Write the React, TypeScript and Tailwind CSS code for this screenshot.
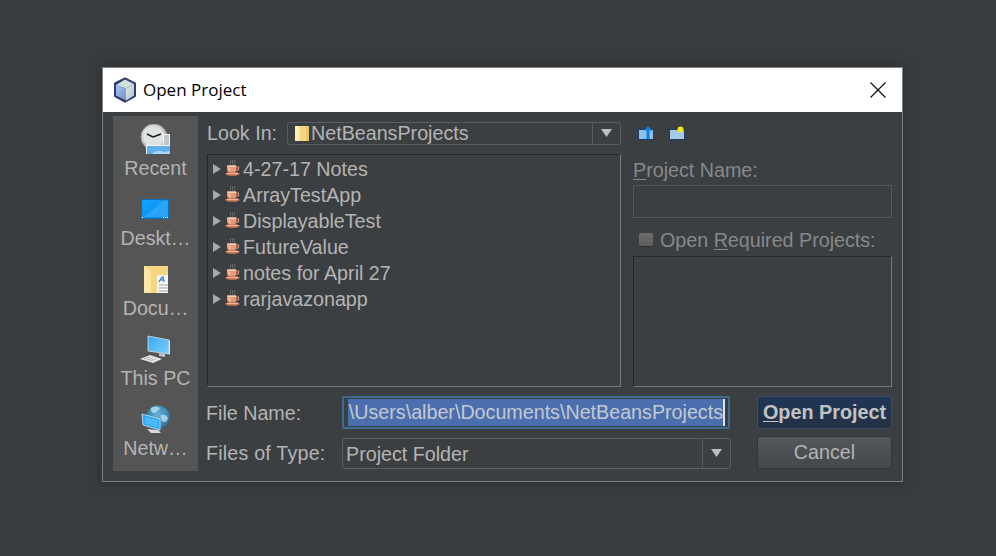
import React from "react";

const CUBE = () => (
  <svg width="24" height="26" viewBox="0 0 24 26">
    <defs>
      <linearGradient id="cf" x1="0" y1="0" x2="1" y2="1"><stop offset="0" stopColor="#a6c6ee" /><stop offset="1" stopColor="#6f90c8" /></linearGradient>
      <linearGradient id="cr" x1="0" y1="0" x2="1" y2="1"><stop offset="0" stopColor="#e4e8dc" /><stop offset="1" stopColor="#b0c4d0" /></linearGradient>
    </defs>
    <path d="M12 1.5 22 6.5V19L12 24.5 2 19V6.5Z" fill="#2f3a70" stroke="#2f3a70" strokeWidth="2" strokeLinejoin="round" />
    <path d="M12 2.5 21 7 13 11.5 3 8Z" fill="#cfe0dc" />
    <path d="M3 8 13 11.5V23.5L3 18.5Z" fill="url(#cf)" />
    <path d="M21 7 13 11.5V23.5L21 18.5Z" fill="url(#cr)" />
  </svg>
);

const Clock = () => (
  <svg width="30" height="30" viewBox="0 0 30 30">
    <defs><linearGradient id="cl" x1="0" y1="0" x2="1" y2="1"><stop offset="0" stopColor="#e8eaeb" /><stop offset="1" stopColor="#9ea4a8" /></linearGradient></defs>
    <circle cx="14" cy="13" r="13" fill="url(#cl)" stroke="#8f979c" />
    <circle cx="14" cy="13" r="10.5" fill="#dfe3e3" />
    <path d="M13 13 7 10M13 13 21 10" stroke="#1c1c1c" strokeWidth="1.4" />
    <rect x="23" y="10" width="7" height="12" fill="#f2f2f2" />
    <path d="M24 12h5M24 14h5M24 16h5M24 18h5M24 20h5" stroke="#8d9aa5" strokeWidth="1" />
    <rect x="6" y="21" width="24" height="9" fill="#f4f4f4" />
    <rect x="7" y="22" width="23" height="8" fill="#5fb0ea" />
    <path d="M12 30c3-4 8-4 12-2l6-1v3Z" fill="#a6d6f6" />
  </svg>
);

const Desktop = () => (
  <svg width="28" height="20" viewBox="0 0 28 20">
    <defs><linearGradient id="dg" x1="0" y1="0" x2="1" y2="1"><stop offset="0" stopColor="#12a3ff" /><stop offset="1" stopColor="#0f86e6" /></linearGradient></defs>
    <rect x="0.5" y="0.5" width="27" height="19" fill="url(#dg)" stroke="#0b6fbe" />
    <path d="M3 18 22 2h5v16Z" fill="#3fb4ff" opacity="0.55" />
    <rect x="1" y="18" width="1" height="1" fill="#fff" /><rect x="22" y="18" width="1" height="1" fill="#fff" /><rect x="24" y="18" width="1" height="1" fill="#fff" /><rect x="26" y="18" width="1" height="1" fill="#fff" />
  </svg>
);

const Documents = () => (
  <svg width="24" height="27" viewBox="0 0 24 27">
    <rect width="24" height="27" fill="#f5d77f" />
    <path d="M0 0 7 6V27H0Z" fill="#fbe6a4" />
    <rect x="13" y="9" width="11" height="18" fill="#f5f6f7" />
    <path d="M15 16 18 11h1l1 5M16 14h3" stroke="#2374c9" strokeWidth="1.2" fill="none" />
    <path d="M15 19h9M15 22h9M15 25h9" stroke="#9aa3aa" />
  </svg>
);

const ThisPC = () => (
  <svg width="32" height="28" viewBox="0 0 32 28">
    <defs><linearGradient id="pg" x1="0" y1="0" x2="1" y2="1"><stop offset="0" stopColor="#3aa8f0" /><stop offset="1" stopColor="#7fd0fb" /></linearGradient></defs>
    <path d="M9 1 30 5V19L9 16Z" fill="url(#pg)" stroke="#d6e2ea" strokeWidth="0.8" />
    <path d="M30 5 31 6V20L30 19Z" fill="#dfe5e8" />
    <path d="M20 18l6 1v3l-6-1Z" fill="#bfc6cb" />
    <path d="M1 24 11 20 23 24 14 28Z" fill="#e4e6e7" />
    <path d="M5 24 11 22M8 25 14 23M11 26 17 24" stroke="#a9aeb2" strokeWidth="0.8" />
  </svg>
);

const Network = () => (
  <svg width="29" height="29" viewBox="0 0 29 29">
    <defs><radialGradient id="ng" cx="0.5" cy="0.4" r="0.65"><stop offset="0" stopColor="#69b5d9" /><stop offset="1" stopColor="#206f9d" /></radialGradient></defs>
    <circle cx="17" cy="12" r="11.5" fill="url(#ng)" />
    <path d="M10 3c3-2 8-2 9 1-3 1-3 4-6 4-2 0-4-3-3-5ZM20 10c3-1 6 0 7 3-1 4-4 5-6 3-1-2-2-5-1-6Z" fill="#bcdff0" opacity="0.8" />
    <path d="M1 9 19 14V25L2 20Z" fill="#29a5f2" stroke="#cfe6f4" strokeWidth="0.8" />
    <path d="M4 12 17 15V23L4 19Z" fill="#63c6fb" opacity="0.6" />
    <path d="M6 24 17 25 20 28 10 28Z" fill="#d9dcde" />
  </svg>
);

const Coffee = () => (
  <svg width="15" height="16" viewBox="0 0 15 16" className="shrink-0">
    <path d="M5.5 0.5v4M7.5 0.5v4M9.5 0.5v4" stroke="#a0a0a0" strokeWidth="0.6" strokeDasharray="2 1" />
    <path d="M2 5.5h9.5v3.5C11.5 11.5 9.5 13 6.7 13S2 11.5 2 9Z" fill="#e8997a" />
    <path d="M2.5 5.5h8.5v1.4H2.5Z" fill="#f7dac8" />
    <path d="M3 8c0 2 1 3.5 2.5 4V8Z" fill="#f3b89c" />
    <path d="M11.5 7h2v2.5l-2 1.2" fill="none" stroke="#e0906e" strokeWidth="1.2" />
    <ellipse cx="7.5" cy="13.8" rx="7.3" ry="2" fill="#cf7a58" />
    <path d="M2 13.5h11" stroke="#f6c7ad" strokeWidth="0.8" />
  </svg>
);

const Folder = () => (
  <svg width="14" height="15" viewBox="0 0 14 15" className="shrink-0">
    <rect width="14" height="15" rx="1" fill="#f5d680" />
    <path d="M0 0h3.5l1 2v13H0Z" fill="#fdeeb4" />
    <rect x="11" width="3" height="15" fill="#e9c565" />
  </svg>
);

const Up = () => (
  <svg width="16" height="14" viewBox="0 0 16 14">
    <rect x="0.5" y="3.5" width="15" height="10" fill="#8fbfe6" stroke="#1b3f66" />
    <path d="M10 0 14 4.5H11.5V13H8.5V4.5H6Z" fill="#1080e8" />
  </svg>
);

const NewFolder = () => (
  <svg width="16" height="14" viewBox="0 0 16 14">
    <rect x="0.5" y="3.5" width="15" height="10" fill="#a4cae8" stroke="#1b3f66" />
    <circle cx="11.5" cy="3.5" r="3" fill="#f7e812" />
  </svg>
);

const Caret = () => (
  <svg width="13" height="10" viewBox="0 0 13 10"><path d="M1 1h11L6.5 9Z" fill="#bdbdbd" /></svg>
);

const places = [
  { label: "Recent", icon: <Clock /> },
  { label: "Deskt…", icon: <Desktop /> },
  { label: "Docu…", icon: <Documents /> },
  { label: "This PC", icon: <ThisPC /> },
  { label: "Netw…", icon: <Network /> },
];

const files = ["4-27-17 Notes", "ArrayTestApp", "DisplayableTest", "FutureValue", "notes for April 27", "rarjavazonapp"];

export default function App() {
  return (
    <div className="w-[996px] h-[556px] bg-[#383c3f] pt-[67px] pl-[102px] font-['Liberation_Sans',Arial,sans-serif] text-[19.7px] leading-[24px] text-[#b4b4b4] overflow-hidden">
      <div className="w-[801px] h-[415px] border border-[#7d7f80] bg-[#3c3f41] flex flex-col shadow-[0_0_12px_rgba(0,0,0,0.25)]">
        <div className="h-[44px] shrink-0 bg-white flex items-center pl-[10px] pr-[15px] text-black font-['Open_Sans',sans-serif] text-[17px]">
          <CUBE />
          <span className="ml-[6px] flex-1">Open Project</span>
          <svg width="18" height="18" viewBox="0 0 18 18"><path d="M1.5 1.5 16.5 16.5M16.5 1.5 1.5 16.5" stroke="#111" strokeWidth="1.2" /></svg>
        </div>
        <div className="h-[369px] flex pl-[10px] pr-[10px] pt-[4px] pb-[10px] gap-[8px]">
          <div className="w-[85px] h-[355px] shrink-0 bg-[#555555] flex flex-col items-center pt-[7px] overflow-hidden">
            {places.map((p) => (
              <div key={p.label} className="h-[70px] shrink-0 flex flex-col items-center">
                <div className="h-[32px] flex items-center justify-center">{p.icon}</div>
                <div className="mt-[1px]">{p.label}</div>
              </div>
            ))}
          </div>
          <div className="flex-1 flex flex-col min-w-0 pt-[6px]">
            <div className="flex items-center h-[22px]">
              <span className="w-[81px] pl-[1px] shrink-0">Look In:</span>
              <div className="w-[334px] h-[23px] border border-[#5a5d5f] rounded-[3px] flex items-center pl-[7px]">
                <Folder />
                <span className="ml-[2px] flex-1">NetBeansProjects</span>
                <div className="w-[28px] h-full border-l border-[#5a5d5f] flex items-center justify-center"><Caret /></div>
              </div>
              <div className="ml-[17px] flex items-center gap-[15px]"><Up /><NewFolder /></div>
            </div>
            <div className="flex mt-[10px] h-[233px]">
              <div className="w-[414px] ml-[1px] border-t border-l border-[#252729] border-r-[#76787a] border-b-[#76787a] border-r border-b pt-[1px] pl-[5px]">
                {files.map((f) => (
                  <div key={f} className="flex items-center h-[26px]">
                    <svg width="8" height="10" viewBox="0 0 8 10" className="shrink-0"><path d="M0 0 8 5 0 10Z" fill="#a8a8a8" /></svg>
                    <span className="ml-[4px] flex -translate-y-[1px]"><Coffee /></span>
                    <span className="ml-[3px]">{f}</span>
                  </div>
                ))}
              </div>
              <div className="ml-[12px] flex-1 flex flex-col text-[#86898b]">
                <div className="h-[31px] pt-[4px]"><span className="underline underline-offset-2 decoration-1">P</span>roject Name:</div>
                <div className="h-[33px] border border-[#55585a]" />
                <div className="flex items-center h-[38px] pl-[6px] pt-[6px]">
                  <div className="w-[14px] h-[14px] rounded-[2px] bg-gradient-to-b from-[#6d6d6d] to-[#5c5c5c] border-b border-[#2e2e2e]" />
                  <span className="ml-[7px]">Open <span className="underline underline-offset-2 decoration-1">R</span>equired Projects:</span>
                </div>
                <div className="flex-1 border-t border-l border-[#252729] border-r border-b border-r-[#76787a] border-b-[#76787a]" />
              </div>
            </div>
            <div className="flex items-center mt-[8px] h-[34px]">
              <span className="w-[136px] shrink-0 translate-y-[1px]">File Name:</span>
              <div className="w-[388px] h-[33px] border-2 border-[#3f6b93] rounded-[2px] flex items-center pr-[3px] overflow-hidden justify-end">
                <span className="h-[27px] leading-[27px] pl-[1px] bg-[#4b6eaf] text-[#c4c9d0] whitespace-nowrap border-r-2 border-[#dfe3e8]">\Users\alber\Documents\NetBeansProjects</span>
              </div>
              <button className="ml-[27px] w-[135px] h-[33px] rounded-[3px] border border-[#3c4f66] bg-gradient-to-b from-[#1e3656] to-[#233245] font-bold text-[19.8px] text-[#c2c2c2]"><span className="underline underline-offset-2">O</span>pen Project</button>
            </div>
            <div className="flex items-center mt-[7px] h-[34px]">
              <span className="w-[136px] shrink-0 tracking-[0.01em]">Files of Type:</span>
              <div className="w-[389px] h-[31px] border border-[#5a5d5f] rounded-[3px] flex items-center pl-[3px]">
                <span className="flex-1 translate-y-[1px]">Project Folder</span>
                <div className="w-[28px] h-full border-l border-[#5a5d5f] flex items-center justify-center"><Caret /></div>
              </div>
              <button className="ml-[26px] w-[135px] h-[33px] -translate-y-[1px] rounded-[3px] border border-[#333638] bg-gradient-to-b from-[#55585a] to-[#45484a] text-[#b4b4b4]">Cancel</button>
            </div>
          </div>
        </div>
      </div>
    </div>
  );
}
